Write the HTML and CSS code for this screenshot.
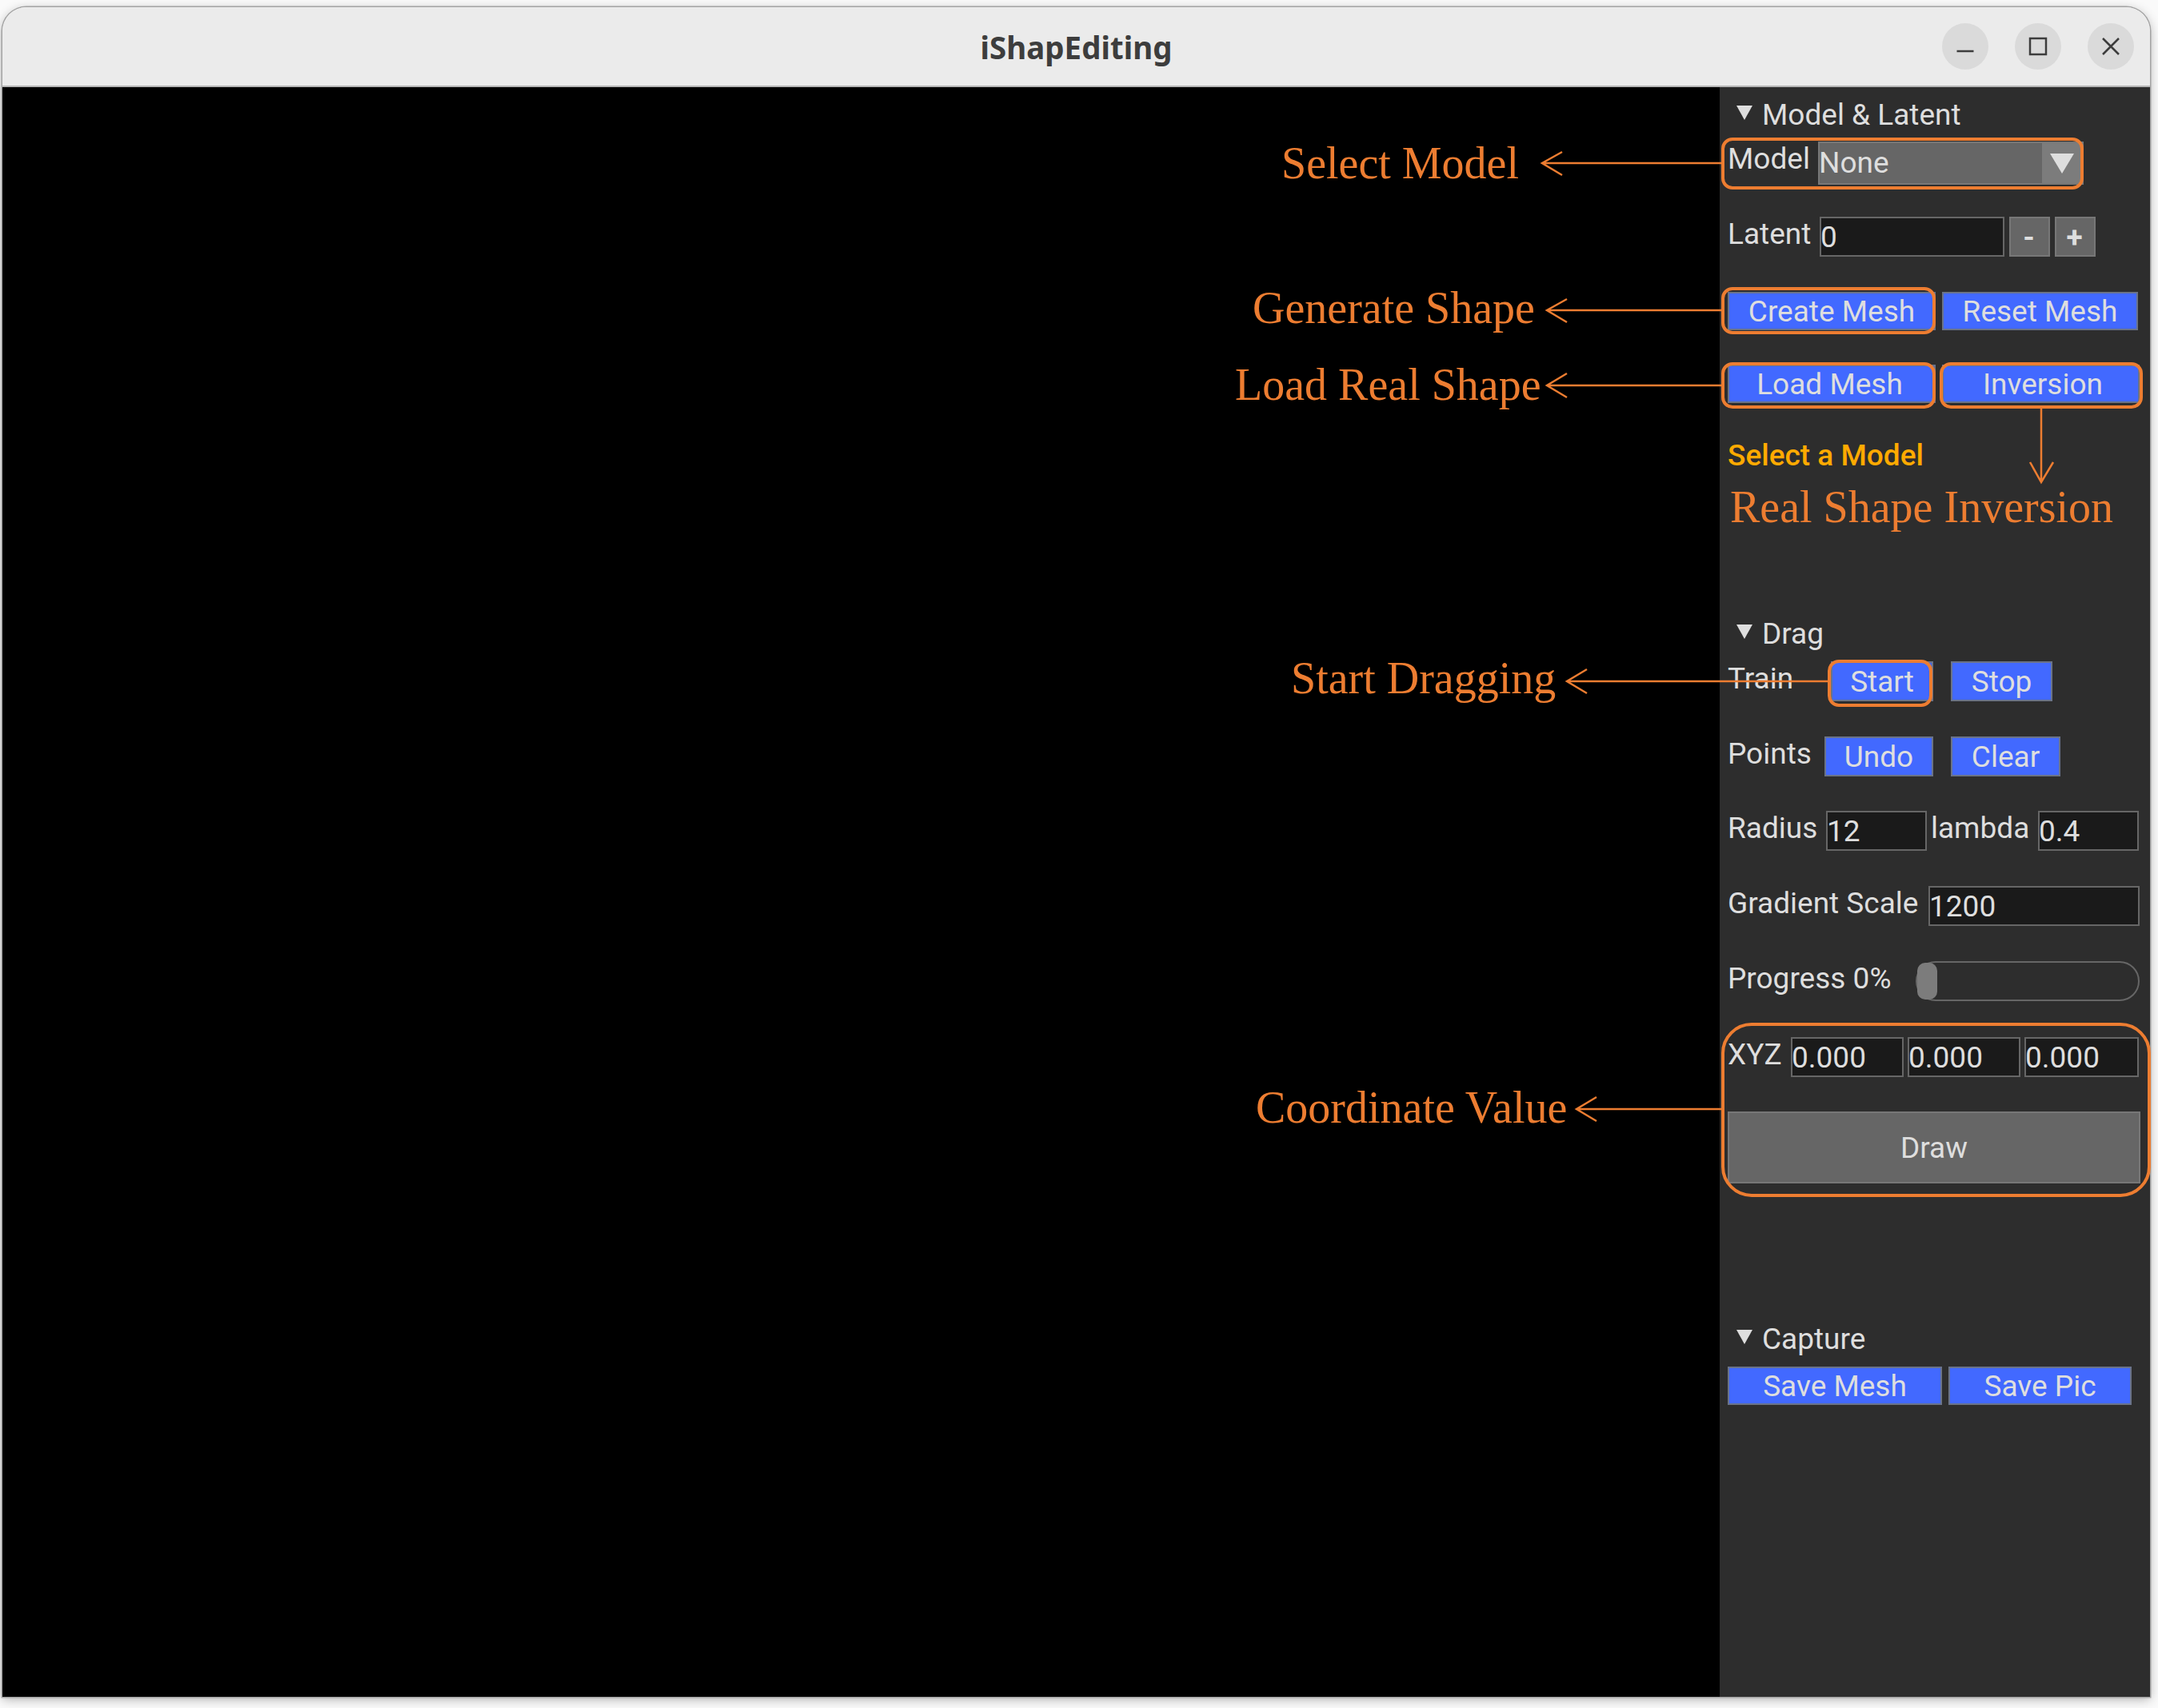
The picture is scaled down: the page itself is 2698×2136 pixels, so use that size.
FILE: index.html
```html
<!DOCTYPE html>
<html lang="en">
<head>
  <meta charset="UTF-8" />
  <title>iShapEditing</title>
  <link rel="stylesheet" href="styles.css">
</head>
<body>
  <div class="window">
    <header class="titlebar">
      <h1>iShapEditing</h1>
      <div class="window-buttons">
        <button class="win-btn" aria-label="Minimize">
          <svg viewBox="0 0 24 24" width="24" height="24"><path d="M1.5 18h21" /></svg>
        </button>
        <button class="win-btn" aria-label="Maximize">
          <svg viewBox="0 0 24 24" width="24" height="24"><path d="M2 2h20v20H2z" /></svg>
        </button>
        <button class="win-btn" aria-label="Close">
          <svg viewBox="0 0 24 24" width="24" height="24"><path d="M2 2l20 20M22 2L2 22" /></svg>
        </button>
      </div>
    </header>

    <div class="content">
      <main class="viewport"></main>

      <aside class="panel">
        <div class="heading"><span class="tri"></span>Model &amp; Latent</div>
        <div class="row row-model">
          <label>Model</label>
          <div class="select">
            <span class="select-value">None</span>
            <span class="select-arrow"><span class="tri tri-big"></span></span>
          </div>
        </div>
        <div class="row row-latent">
          <label>Latent</label>
          <input type="text" value="0" />
          <button class="btn-grey">-</button>
          <button class="btn-grey">+</button>
        </div>
        <div class="row row-short row-create">
          <button class="btn">Create Mesh</button>
          <button class="btn">Reset Mesh</button>
        </div>
        <div class="row row-short row-load">
          <button class="btn">Load Mesh</button>
          <button class="btn">Inversion</button>
        </div>
        <div class="message">Select a Model</div>

        <div class="heading heading-drag"><span class="tri"></span>Drag</div>
        <div class="row row-train">
          <label>Train</label>
          <button class="btn">Start</button>
          <button class="btn">Stop</button>
        </div>
        <div class="row row-points">
          <label>Points</label>
          <button class="btn">Undo</button>
          <button class="btn">Clear</button>
        </div>
        <div class="row row-radius">
          <label>Radius</label>
          <input type="text" value="12" />
          <label>lambda</label>
          <input type="text" value="0.4" />
        </div>
        <div class="row row-gradient">
          <label>Gradient Scale</label>
          <input type="text" value="1200" />
        </div>
        <div class="row row-progress">
          <label>Progress 0%</label>
          <div class="slider"><div class="grab"></div></div>
        </div>
        <div class="row row-xyz">
          <label>XYZ</label>
          <input type="text" value="0.000" />
          <input type="text" value="0.000" />
          <input type="text" value="0.000" />
        </div>
        <button class="btn-grey btn-draw">Draw</button>

        <div class="heading heading-capture"><span class="tri"></span>Capture</div>
        <div class="row row-short row-save">
          <button class="btn">Save Mesh</button>
          <button class="btn">Save Pic</button>
        </div>
      </aside>
    </div>
  </div>

  <svg class="notes" viewBox="0 0 2698 2136" width="2698" height="2136">
    <rect x="2154" y="174" width="449" height="61" rx="12" />
    <rect x="2154" y="361" width="264" height="55" rx="12" />
    <rect x="2154" y="455" width="264" height="54" rx="12" />
    <rect x="2427" y="455" width="250" height="54" rx="12" />
    <rect x="2287" y="827" width="127" height="55" rx="12" />
    <rect x="2154" y="1281" width="533" height="214" rx="36" />

    <path d="M1953 190L1928 204L1953 219M1928 204H2154" />
    <path d="M1959 374L1934 388L1959 403M1934 388H2154" />
    <path d="M1959 467L1934 482L1959 497M1934 482H2154" />
    <path d="M1984 837L1959 852L1984 867M1959 852H2288" />
    <path d="M1996 1372L1971 1387L1996 1402M1971 1387H2154" />
    <path d="M2552 509V603M2538 578L2552 603L2567 578" />

    <text x="1602" y="223">Select Model</text>
    <text x="1566" y="404">Generate Shape</text>
    <text x="1544" y="500">Load Real Shape</text>
    <text x="2163" y="653">Real Shape Inversion</text>
    <text x="1614" y="867">Start Dragging</text>
    <text x="1570" y="1404">Coordinate Value</text>
  </svg>
</body>
</html>
```

FILE: styles.css
```css
* {
  box-sizing: border-box;
  margin: 0;
}
html, body {
  height: 100%;
}
body {
  position: relative;
  padding: 9px 10px 14px 3px;
  background-color: #fafafa;
  font-family: Roboto, sans-serif;
  font-size: 37px;
  color: #dedede;
  overflow: hidden;
}
.window {
  display: flex;
  flex-direction: column;
  height: 100%;
  border-radius: 30px 30px 0 0;
  box-shadow: 0 0 0 1.5px #a3a3a3, 0 3px 14px rgba(0, 0, 0, 0.3);
  overflow: hidden;
}
.titlebar {
  position: relative;
  flex: none;
  display: flex;
  align-items: center;
  justify-content: flex-end;
  height: 100px;
  padding-right: 20px;
  background-color: #ebebeb;
  border-bottom: 2px solid #b5b5b5;
}
.titlebar h1 {
  position: absolute;
  left: 0;
  right: 0;
  padding-top: 2px;
  text-align: center;
  font-family: "Noto Sans", sans-serif;
  font-size: 38.5px;
  font-weight: 700;
  color: #3d3d3d;
}
.window-buttons {
  display: flex;
  gap: 33px;
}
.win-btn {
  display: flex;
  align-items: center;
  justify-content: center;
  width: 58px;
  height: 58px;
  padding: 0;
  border: none;
  border-radius: 50%;
  background-color: #dadada;
}
.win-btn path {
  fill: none;
  stroke: #3d3d3d;
  stroke-width: 2.5;
}
.content {
  flex: 1;
  display: flex;
  min-height: 0;
}
.viewport {
  flex: 1;
  background-color: #000;
}
.panel {
  flex: none;
  width: 538px;
  padding: 9px 11px 0 10px;
  background-color: #2d2d2d;
}
.heading {
  display: flex;
  align-items: center;
  gap: 12px;
  height: 50px;
  padding-left: 11px;
}
.heading-drag {
  margin-top: 172px;
  margin-bottom: 10px;
}
.heading-capture {
  margin-top: 169px;
  margin-bottom: 10px;
}
.heading:first-child {
  margin-bottom: 9px;
}
.tri {
  width: 0;
  height: 0;
  margin-bottom: 4px;
  border-left: 10.5px solid transparent;
  border-right: 10.5px solid transparent;
  border-top: 18px solid #dedede;
}
.tri-big {
  margin: 0;
  border-left-width: 15px;
  border-right-width: 15px;
  border-top-width: 25px;
}
.row {
  display: grid;
  height: 50px;
  margin-bottom: 44px;
}
.row-short {
  height: 48px;
  margin-bottom: 43px;
}
label {
  line-height: 44px;
  white-space: nowrap;
}
input {
  width: 100%;
  height: 100%;
  padding: 1px 0 0;
  border: 2px solid #666;
  background-color: #1a1a1a;
  color: #dedede;
  font: inherit;
  text-indent: -1px;
}
button {
  font: inherit;
  color: inherit;
}
.btn {
  padding: 1px 0 0;
  border: 2px solid #6a7388;
  background-color: #4269ff;
}
.btn-grey {
  padding: 1px 0 0;
  border: 2px solid #777;
  background-color: #666;
}
.row-model { grid-template-columns: 113px 332px; }
.row-latent { grid-template-columns: 109px 231px 51px 51px; column-gap: 6px; }
.row-latent .btn-grey { padding-right: 2px; font-weight: 700; }
.row-create { grid-template-columns: 260px 245px; column-gap: 8px; }
.row-load { grid-template-columns: 260px 247px; column-gap: 8px; margin-bottom: 41px; }
.row-load .btn:first-child { padding-right: 5px; }
.row-load .btn:last-child { padding-left: 5px; }
.row-train { grid-template-columns: 129px 128px 149px; }
.row-train .btn + .btn, .row-points .btn + .btn { margin-left: 22px; }
.row-points { grid-template-columns: 121px 136px 159px; margin-bottom: 43px; }
.row-radius { grid-template-columns: 123px 126px 139px 126px; }
.row-radius input + label { padding-left: 5px; }
.row-gradient { grid-template-columns: 251px 264px; }
.row-progress { grid-template-columns: 235px 280px; margin-bottom: 45px; }
.row-xyz { grid-template-columns: 74px 141px 141px 143px; column-gap: 5px; margin-bottom: 43px; }
.row-save { grid-template-columns: 268px 229px; column-gap: 8px; margin: 0; }
.select {
  display: flex;
  background-color: #666;
  border: 2px solid #777;
}
.select-value {
  flex: 1;
  margin-left: -1px;
  line-height: 50px;
}
.select-arrow {
  display: flex;
  align-items: center;
  justify-content: center;
  width: 50px;
  background-color: #7c7c7c;
}
.message {
  height: 50px;
  line-height: 50px;
  font-weight: 500;
  color: #ffaa00;
}
.slider {
  border: 2px solid #666;
  border-radius: 25px;
}
.grab {
  width: 25px;
  height: 100%;
  border-radius: 10px;
  background-color: #7c7c7c;
}
.btn-draw {
  display: block;
  width: 516px;
  height: 90px;
}
.notes {
  position: absolute;
  top: 0;
  left: 0;
  pointer-events: none;
}
.notes rect, .notes path {
  fill: none;
  stroke: #ed7d31;
}
.notes rect {
  stroke-width: 4;
}
.notes path {
  stroke-width: 2.5;
}
.notes text {
  font-family: "Liberation Serif", serif;
  font-size: 56px;
  fill: #ed7d31;
}
```
